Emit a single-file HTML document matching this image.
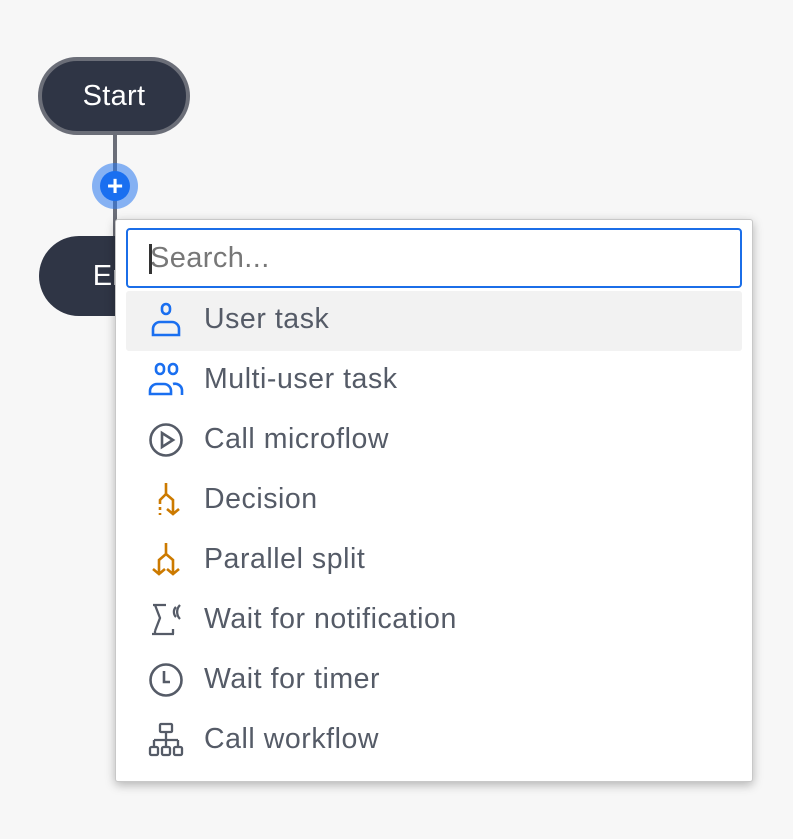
<!DOCTYPE html>
<html><head><style>
body{margin:0;width:793px;height:839px;background:#f7f7f7;font-family:"Liberation Sans",sans-serif;position:relative;overflow:hidden}
.pill{position:absolute;background:#2f3545;color:#fff;font-size:29px;display:flex;align-items:center;justify-content:center;border-radius:40px;letter-spacing:0.3px}
#start{left:38px;top:57px;width:144px;height:70px;border:4px solid #6b6e78}
#end{left:39px;top:236px;width:160px;height:80px}
.line{position:absolute;left:113px;top:134px;width:4px;height:102px;background:#6b6e78}
.halo{position:absolute;left:92px;top:163px;width:46px;height:46px;border-radius:50%;background:rgba(40,120,240,.55)}
.plus{position:absolute;left:100px;top:171px;width:30px;height:30px;border-radius:50%;background:#1a6ff0;color:#fff;font-size:28px;line-height:29px;text-align:center;font-weight:bold}
.menu{position:absolute;left:115px;top:219px;width:636px;height:561px;background:#fff;border:1px solid #c8c8c8;border-radius:3px;box-shadow:0 3px 10px rgba(0,0,0,.28)}
.search{position:absolute;left:10px;top:8px;height:56px;border:2px solid #1b6ee8;border-radius:4px;font-size:29px;color:#777;line-height:56px;padding-left:22px;width:590px;letter-spacing:0.4px}
.caret{position:absolute;left:21px;top:14px;width:3px;height:30px;background:#333}
.item{position:absolute;left:10px;width:616px;height:60px;font-size:28.5px;color:#555b67;line-height:56px;letter-spacing:0.55px}
.item span{position:absolute;left:78px}
.item svg{position:absolute;left:22px;top:11px}
.hl{background:#f2f2f2;border-radius:3px}
</style></head><body>
<div class="pill" id="start">Start</div>
<div class="line"></div>
<div class="pill" id="end">End</div>
<div class="halo"></div><div class="plus">+</div>
<div class="menu">
<div class="search"><div class="caret"></div>Search...</div>
<div class="item hl" style="top:71px"><svg width="36" height="36" viewBox="0 0 36 36" fill="none" stroke="#1a6ff0" stroke-width="2.6"><rect x="14" y="2" width="8" height="10" rx="4"/><path d="M5 33v-6a7 7 0 0 1 7-7h12a7 7 0 0 1 7 7v6z"/></svg><span>User task</span></div>
<div class="item" style="top:131px"><svg width="36" height="36" viewBox="0 0 36 36" fill="none" stroke="#1a6ff0" stroke-width="2.6"><rect x="8" y="2" width="8" height="10" rx="4"/><rect x="21" y="2" width="8" height="10" rx="4"/><path d="M2 32v-3a7 7 0 0 1 7-7h7a7 7 0 0 1 7 7v3zM25 22a7 7 0 0 1 9 6v5"/></svg><span>Multi-user task</span></div>
<div class="item" style="top:191px"><svg width="36" height="36" viewBox="0 0 36 36" fill="none" stroke="#555b67" stroke-width="2.6"><circle cx="18" cy="18" r="15.5"/><path d="M14 11v14l11-7z"/></svg><span>Call microflow</span></div>
<div class="item" style="top:251px"><svg width="36" height="36" viewBox="0 0 36 36" fill="none" stroke="#cc7a00" stroke-width="2.6"><path d="M18 1v11l7 6v14M19 27l6 5 6-5"/><path d="M18 12l-6 6v4M12 25v3M12 31v2"/></svg><span>Decision</span></div>
<div class="item" style="top:311px"><svg width="36" height="36" viewBox="0 0 36 36" fill="none" stroke="#cc7a00" stroke-width="2.6"><path d="M18 1v11l-7 6v14M5 27l6 5 6-5M18 12l7 6v14M19 27l6 5 6-5"/></svg><span>Parallel split</span></div>
<div class="item" style="top:371px"><svg width="36" height="36" viewBox="0 0 36 36" fill="none" stroke="#555b67" stroke-width="2.3"><path d="M5 3h13M7 3l5 13-5 13M4 32h22M7 29v3M25 27v5M28 5a7 7 0 0 0 0 10M32 3a10 10 0 0 0 0 14"/></svg><span>Wait for notification</span></div>
<div class="item" style="top:431px"><svg width="36" height="36" viewBox="0 0 36 36" fill="none" stroke="#555b67" stroke-width="2.6"><circle cx="18" cy="18" r="15.5"/><path d="M16 9v11h6"/></svg><span>Wait for timer</span></div>
<div class="item" style="top:491px"><svg width="36" height="36" viewBox="0 0 36 36" fill="none" stroke="#555b67" stroke-width="2.3"><rect x="12" y="2" width="12" height="8" rx="1"/><path d="M18 10v8M6 18h24M6 18v7M18 18v7M30 18v7"/><rect x="2" y="25" width="8" height="8" rx="1.5"/><rect x="14" y="25" width="8" height="8" rx="1.5"/><rect x="26" y="25" width="8" height="8" rx="1.5"/></svg><span>Call workflow</span></div>
</div>
</body></html>
